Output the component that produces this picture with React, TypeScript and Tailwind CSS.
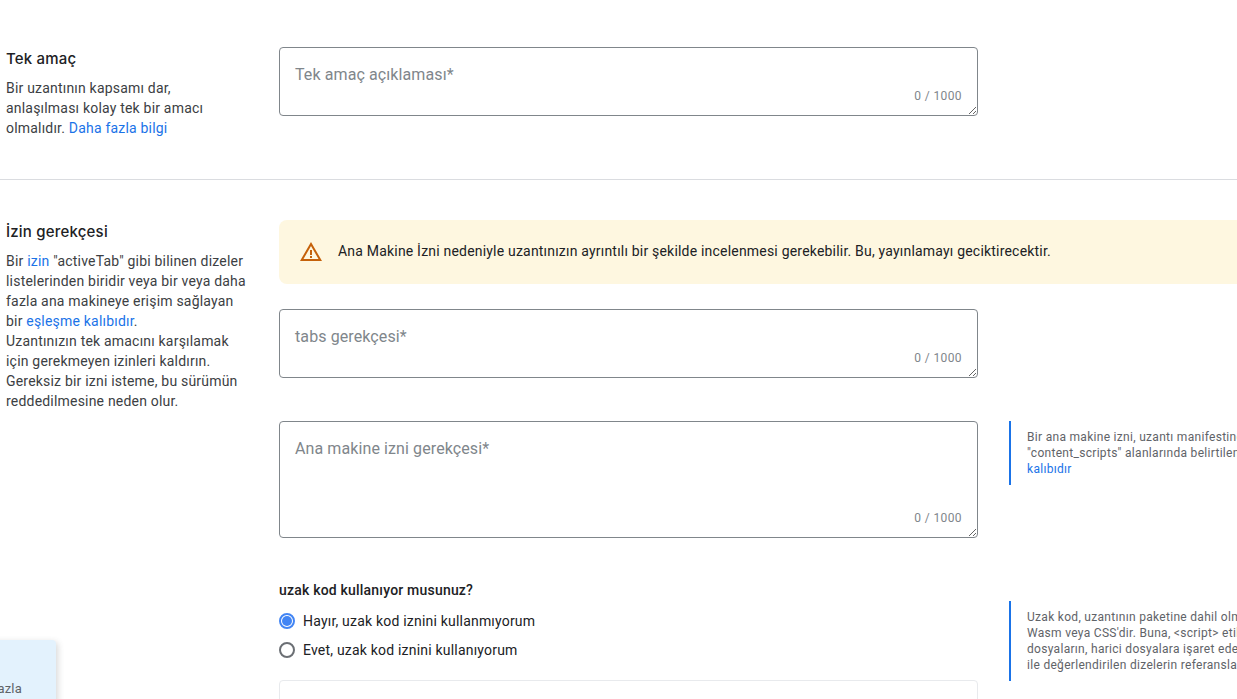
import React from "react";

const Field = ({ label, height }: { label: string; height: string }) => (
  <div className="relative w-[699px] shrink-0 self-start">
    <textarea
      placeholder={label}
      className={`block w-full ${height} rounded-[4px] border border-[#80868b] bg-white px-[15px] pt-[15px] text-[16px] leading-[24px] tracking-[0.1px] text-[#202124] outline-none placeholder:text-[#80868b]`}
    />
    <span className="absolute bottom-[12px] right-[16px] text-[12px] leading-[16px] tracking-[0.4px] text-[#80868b]">
      0 / 1000
    </span>
  </div>
);

const Helper = ({ className, children }: { className: string; children: React.ReactNode }) => (
  <div className={`ml-[31px] w-[228px] shrink-0 overflow-hidden whitespace-nowrap border-l-2 border-[#1a73e8] pl-[16px] pt-[8px] text-[12px] leading-[16px] tracking-[0.3px] text-[#5f6368] ${className}`}>
    {children}
  </div>
);

const Radio = ({ checked, label }: { checked?: boolean; label: string }) => (
  <div className="flex h-[29px] items-center">
    <span className={`flex h-[16px] w-[16px] items-center justify-center rounded-full border-2 ${checked ? "border-[#4285f4]" : "border-[#6b6f74]"}`}>
      {checked && <span className="h-[10px] w-[10px] rounded-full bg-[#4285f4]" />}
    </span>
    <span className="ml-[8px] text-[14px] tracking-[0.2px] text-[#202124]">{label}</span>
  </div>
);

const Title = ({ children }: { children: React.ReactNode }) => (
  <h2 className="mb-[7px] font-['Inter',sans-serif] text-[15px] font-medium leading-[24px] text-[#202124]">
    {children}
  </h2>
);

export default function App() {
  return (
    <div className="relative h-[699px] w-[1237px] overflow-hidden bg-white font-['Roboto',sans-serif] text-[14px] leading-[20px] tracking-[0.2px] text-[#3c4043]">
      {/* Tek amaç */}
      <section className="flex h-[180px] border-b border-[#dadce0] pl-[6px] pt-[47px]">
        <div className="w-[273px] shrink-0">
          <Title>Tek amaç</Title>
          <p className="whitespace-nowrap">
            Bir uzantının kapsamı dar,
            <br />
            anlaşılması kolay tek bir amacı
            <br />
            olmalıdır. <a className="text-[#1a73e8]">Daha fazla bilgi</a>
          </p>
        </div>
        <Field label="Tek amaç açıklaması*" height="h-[69px]" />
      </section>

      {/* İzin gerekçesi */}
      <section className="flex pl-[6px] pt-[40px]">
        <div className="w-[273px] shrink-0">
          <Title>İzin gerekçesi</Title>
          <p className="whitespace-nowrap">
            Bir <a className="text-[#1a73e8]">izin</a> "activeTab" gibi bilinen dizeler
            <br />
            listelerinden biridir veya bir veya daha
            <br />
            fazla ana makineye erişim sağlayan
            <br />
            bir <a className="text-[#1a73e8]">eşleşme kalıbıdır</a>.
            <br />
            Uzantınızın tek amacını karşılamak
            <br />
            için gerekmeyen izinleri kaldırın.
            <br />
            Gereksiz bir izni isteme, bu sürümün
            <br />
            reddedilmesine neden olur.
          </p>
        </div>
        <div className="min-w-0 flex-1">
          <div className="flex h-[64px] w-[980px] items-center rounded-[8px] bg-[#fef7e0] pl-[20px] text-[#202124]">
            <svg width="24" height="24" viewBox="0 0 24 24" fill="#c5610a" className="shrink-0">
              <path d="M12 5.99 19.53 19H4.47L12 5.99M12 2 1 21h22L12 2z" />
              <path d="M13 16h-2v2h2zM13 10h-2v5h2z" />
            </svg>
            <span className="mb-[2px] ml-[15px] whitespace-nowrap">
              Ana Makine İzni nedeniyle uzantınızın ayrıntılı bir şekilde incelenmesi gerekebilir. Bu, yayınlamayı geciktirecektir.
            </span>
          </div>
          <div className="mt-[25px]">
            <Field label="tabs gerekçesi*" height="h-[69px]" />
          </div>
          <div className="mt-[43px] flex items-start">
            <Field label="Ana makine izni gerekçesi*" height="h-[117px]" />
            <Helper className="h-[64px]">
              Bir ana makine izni, uzantı manifestindeki
              <br />
              "content_scripts" alanlarında belirtilen
              <br />
              <a className="text-[#1a73e8]">kalıbıdır</a>
            </Helper>
          </div>
          <div className="mt-[42px] flex items-start">
            <div className="w-[699px] shrink-0">
              <p className="mb-[6px] font-medium text-[#202124]">uzak kod kullanıyor musunuz?</p>
              <Radio checked label="Hayır, uzak kod iznini kullanmıyorum" />
              <Radio label="Evet, uzak kod iznini kullanıyorum" />
              <div className="mt-[16px] h-[60px] rounded-[4px] border border-[#e8eaed]" />
            </div>
            <Helper className="mt-[21px] h-[80px]">
              Uzak kod, uzantının paketine dahil olmayan JS,
              <br />
              Wasm veya CSS'dir. Buna, &lt;script&gt; etiketlerindeki
              <br />
              dosyaların, harici dosyalara işaret eden modüllerin
              <br />
              ile değerlendirilen dizelerin referansları dahildir
            </Helper>
          </div>
        </div>
      </section>

      {/* floating card, cut off at the left edge */}
      <div className="absolute left-[-20px] top-[640px] h-[80px] w-[76px] rounded-[4px] bg-[#e3f2fd] shadow-[2px_2px_6px_rgba(60,64,67,0.2)]">
        <span className="absolute left-[0px] top-[39px] w-[42px] text-right text-[13px] text-[#5f6368]">fazla</span>
      </div>
    </div>
  );
}
